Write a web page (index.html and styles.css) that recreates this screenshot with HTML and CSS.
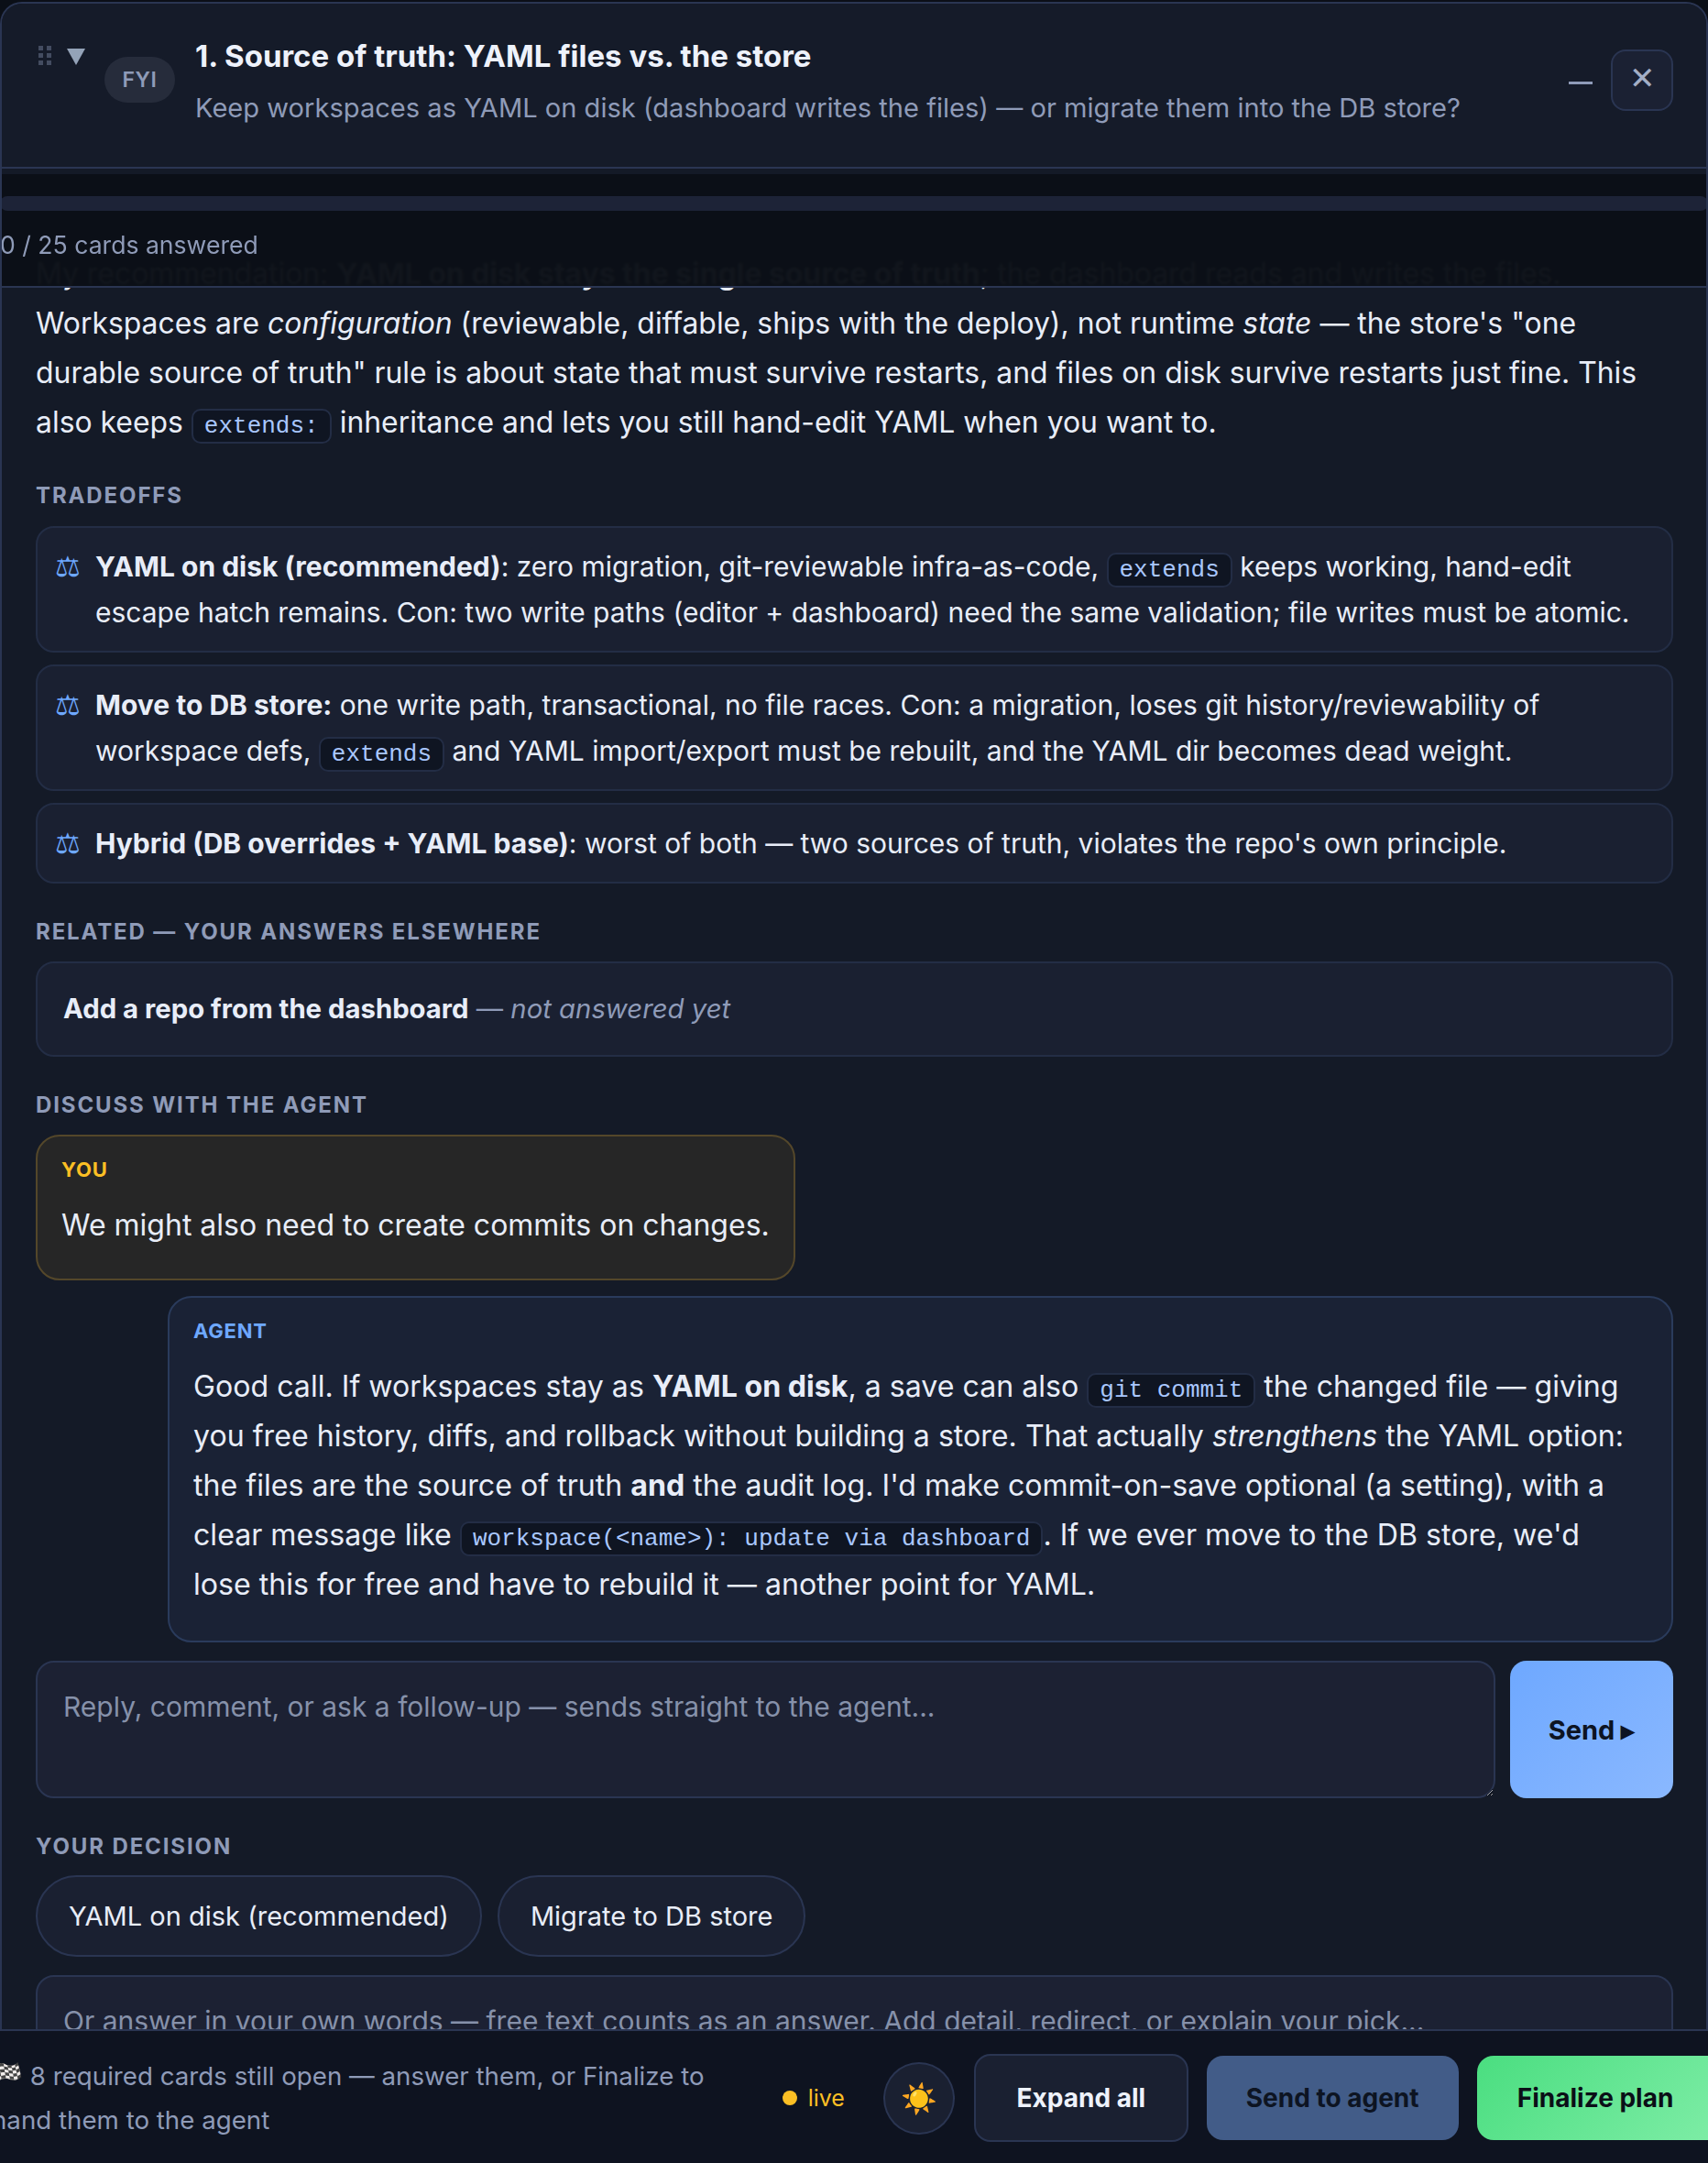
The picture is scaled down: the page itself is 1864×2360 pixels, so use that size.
FILE: index.html
```html
<!DOCTYPE html>
<html lang="en">
<head>
  <meta charset="UTF-8">
  <title>Plan review</title>
  <link rel="stylesheet" href="styles.css">
</head>
<body>
  <div class="page">
    <section class="card">
      <header class="card-head">
        <span class="grip">
          <svg width="14" height="22" viewBox="0 0 14 22"><g fill="#434c60"><rect x="0" y="0" width="5" height="5"/><rect x="9" y="0" width="5" height="5"/><rect x="0" y="8" width="5" height="5"/><rect x="9" y="8" width="5" height="5"/><rect x="0" y="16" width="5" height="5"/><rect x="9" y="16" width="5" height="5"/></g></svg>
        </span>
        <span class="caret"></span>
        <span class="badge">FYI</span>
        <div class="head-text">
          <h2 class="card-title">1. Source of truth: YAML files vs. the store</h2>
          <p class="card-sub">Keep workspaces as YAML on disk (dashboard writes the files) — or migrate them into the DB store?</p>
        </div>
        <span class="minimize"></span>
        <button class="close">✕</button>
      </header>

      <div class="progress">
        <div class="progress-track"></div>
        <div class="progress-label">0 / 25 cards answered</div>
      </div>

      <div class="card-body">
        <p class="lead">My recommendation: <strong>YAML on disk stays the single source of truth</strong>; the dashboard reads and writes the files. Workspaces are <em>configuration</em> (reviewable, diffable, ships with the deploy), not runtime <em>state</em> — the store's "one durable source of truth" rule is about state that must survive restarts, and files on disk survive restarts just fine. This also keeps <code>extends:</code> inheritance and lets you still hand-edit YAML when you want to.</p>

        <h3 class="section-label">Tradeoffs</h3>
        <ul class="tradeoffs">
          <li class="tradeoff"><span class="scale">⚖</span><div><strong>YAML on disk (recommended)</strong>: zero migration, git-reviewable infra-as-code, <code>extends</code> keeps working, hand-edit escape hatch remains. Con: two write paths (editor + dashboard) need the same validation; file writes must be atomic.</div></li>
          <li class="tradeoff"><span class="scale">⚖</span><div><strong>Move to DB store:</strong> one write path, transactional, no file races. Con: a migration, loses git history/reviewability of workspace defs, <code>extends</code> and YAML import/export must be rebuilt, and the YAML dir becomes dead weight.</div></li>
          <li class="tradeoff"><span class="scale">⚖</span><div><strong>Hybrid (DB overrides + YAML base)</strong>: worst of both — two sources of truth, violates the repo's own principle.</div></li>
        </ul>

        <h3 class="section-label">Related — your answers elsewhere</h3>
        <div class="related"><strong>Add a repo from the dashboard</strong> <span class="dim">— <em>not answered yet</em></span></div>

        <h3 class="section-label">Discuss with the agent</h3>
        <div class="bubble bubble-you">
          <div class="who">You</div>
          <div>We might also need to create commits on changes.</div>
        </div>
        <div class="bubble bubble-agent">
          <div class="who">Agent</div>
          <div>Good call. If workspaces stay as <strong>YAML on disk</strong>, a save can also <code>git commit</code> the changed file — giving you free history, diffs, and rollback without building a store. That actually <em>strengthens</em> the YAML option: the files are the source of truth <strong>and</strong> the audit log. I'd make commit-on-save optional (a setting), with a clear message like <code>workspace(&lt;name&gt;): update via dashboard</code>. If we ever move to the DB store, we'd lose this for free and have to rebuild it — another point for YAML.</div>
        </div>

        <div class="reply">
          <textarea class="reply-input" placeholder="Reply, comment, or ask a follow-up — sends straight to the agent..."></textarea>
          <button class="send">Send ▸</button>
        </div>

        <h3 class="section-label">Your decision</h3>
        <div class="choices">
          <button class="choice">YAML on disk (recommended)</button>
          <button class="choice">Migrate to DB store</button>
        </div>
        <textarea class="own-words" placeholder="Or answer in your own words — free text counts as an answer. Add detail, redirect, or explain your pick..."></textarea>
      </div>
    </section>

    <footer class="footer">
      <div class="footer-note">🏁 8 required cards still open — answer them, or Finalize to hand them to the agent</div>
      <div class="live"><span class="live-dot"></span>live</div>
      <button class="theme">☀️</button>
      <button class="btn btn-expand">Expand all</button>
      <button class="btn btn-send">Send to agent</button>
      <button class="btn btn-final">Finalize plan</button>
    </footer>
  </div>
</body>
</html>
```

FILE: styles.css
```css
* {
  box-sizing: border-box;
}
html, body {
  margin: 0;
  height: 100%;
  background: #0b0f17;
  color-scheme: dark;
}
body {
  font-family: Inter, "Noto Sans", sans-serif;
  font-size: 32px;
  line-height: 54px;
  color: #e8edf8;
  overflow: hidden;
}
button, textarea {
  font-family: inherit;
}
.page {
  height: 100vh;
  display: flex;
  flex-direction: column;
  overflow: hidden;
}

/* card */
.card {
  flex: 1;
  min-height: 0;
  margin-top: 2px;
  background: #141a27;
  border: 2px solid #2a3552;
  border-bottom: 0;
  border-radius: 24px 24px 0 0;
  overflow: hidden;
}
.card-head {
  display: flex;
  height: 180px;
  padding: 0 36px 0 40px;
  background: #151b29;
  border-bottom: 2px solid #2a3552;
}
.grip {
  margin: 46px 17px 0 0;
  height: 22px;
  line-height: 0;
}
.caret {
  width: 0;
  height: 0;
  margin-top: 49px;
  border-left: 10px solid transparent;
  border-right: 10px solid transparent;
  border-top: 18px solid #94a3b8;
}
.badge {
  width: 77px;
  height: 50px;
  margin: 58px 22px 0 21px;
  border-radius: 25px;
  background: #262c3b;
  color: #8f9bb8;
  font-size: 23px;
  font-weight: 600;
  line-height: 50px;
  text-align: center;
  letter-spacing: 0.5px;
}
.head-text {
  flex: 1;
  padding-top: 32px;
}
.card-title {
  margin: 0;
  font-size: 33px;
  font-weight: 650;
  line-height: 50px;
  color: #eef2fb;
}
.card-sub {
  margin: 7px 0 0;
  font-size: 29.1px;
  line-height: 50px;
  color: #8f9bb8;
}
.minimize {
  width: 26px;
  height: 3px;
  margin: 85px 20px 0 0;
  background: #8f9bb8;
}
.close {
  width: 68px;
  height: 67px;
  margin-top: 50px;
  padding: 0 0 6px;
  border: 2px solid #2a3552;
  border-radius: 16px;
  background: #1b2133;
  color: #a3aec6;
  font-size: 34px;
  line-height: 1;
}

.progress {
  position: relative;
  z-index: 2;
  height: 124px;
  margin: 6px -2px -42px;
  padding-top: 24px;
  background: rgba(11, 15, 23, 0.975);
  backdrop-filter: blur(1px);
  border-bottom: 2px solid #2a3552;
}
.progress-track {
  height: 16px;
  border-radius: 8px;
  background: #1d2337;
}
.progress-label {
  margin-top: 14px;
  font-size: 26.6px;
  line-height: 46px;
  color: #8f9bb8;
}

/* body */
.card-body {
  padding: 0 36px 0 37px;
}
.lead {
  margin: 0;
  font-size: 31.9px;
}
code {
  display: inline-block;
  padding: 0 12px;
  border: 2px solid #232d45;
  border-radius: 10px;
  background: #0f1522;
  color: #a9c7ff;
  font-family: "Liberation Mono", monospace;
  font-size: 26px;
  line-height: 34px;
}
.section-label {
  margin: 36px 0 0;
  font-size: 24px;
  font-weight: 700;
  line-height: 34px;
  letter-spacing: 1.88px;
  text-transform: uppercase;
  color: #8f9bb8;
}
.tradeoffs {
  display: flex;
  flex-direction: column;
  gap: 13px;
  list-style: none;
  margin: 16px 0 0;
  padding: 0;
}
.tradeoff {
  display: flex;
  gap: 18px;
  padding: 17px 20px 17px 19px;
  border: 2px solid #232d45;
  border-radius: 20px;
  background: #1a2031;
  font-size: 30px;
  line-height: 50px;
}
.scale {
  flex: none;
  width: 26px;
  color: #6ea8ff;
  font-size: 31px;
}
.related {
  margin-top: 15px;
  padding: 23px 28px;
  border: 2px solid #232d45;
  border-radius: 20px;
  background: #1a2031;
  font-size: 29.3px;
}
.dim {
  color: #8f9bb8;
}
.bubble {
  padding: 18px 26px 31px;
  border-radius: 26px;
  border: 2px solid;
}
.who {
  margin-bottom: 16px;
  font-size: 22px;
  font-weight: 700;
  line-height: 36px;
  letter-spacing: 0.8px;
  text-transform: uppercase;
}
.bubble-you {
  width: 829px;
  margin-top: 15px;
  background: #262626;
  border-color: #54472a;
}
.bubble-you .who {
  color: #fbbf24;
}
.bubble-agent {
  margin: 17px 0 0 144px;
  padding-right: 30px;
  padding-bottom: 34px;
  background: #1a2235;
  border-color: #2a3b5c;
  font-size: 32.13px;
}
.bubble-agent .who {
  color: #6ea8ff;
}
.reply {
  display: flex;
  gap: 16px;
  margin-top: 20px;
}
textarea {
  display: block;
  border: 2px solid #2a3552;
  border-radius: 20px;
  background: #1c2133;
  color: #e8edf8;
  font-size: 30px;
  line-height: 46px;
  padding: 25px 28px;
  outline: none;
}
textarea::placeholder {
  color: #8691aa;
  opacity: 1;
}
.reply-input {
  flex: 1;
  height: 150px;
}
.send {
  width: 178px;
  border: 0;
  border-radius: 18px;
  background: linear-gradient(135deg, #6ea8ff, #8ab8ff);
  color: #0d1422;
  font-size: 29px;
  font-weight: 650;
}
.choices {
  display: flex;
  gap: 17px;
  margin-top: 14px;
}
.choice {
  height: 89px;
  padding: 0 34px;
  border: 2px solid #2a3552;
  border-radius: 45px;
  background: #1a2031;
  color: #e8edf8;
  font-size: 29px;
}
.own-words {
  width: 100%;
  height: 150px;
  margin-top: 20px;
}

/* footer */
.footer {
  flex: none;
  display: flex;
  align-items: center;
  width: 1940px;
  height: 146px;
  margin-left: -9px;
  padding-top: 2px;
  background: #0e1320;
  border-top: 2px solid #2a3552;
}
.footer-note {
  width: 805px;
  font-size: 27.7px;
  line-height: 48px;
  color: #8f9bb8;
}
.live {
  display: flex;
  align-items: center;
  gap: 12px;
  width: 111px;
  margin-left: 60px;
  color: #fbbf24;
  font-size: 25px;
}
.live-dot {
  width: 16px;
  height: 16px;
  border-radius: 50%;
  background: #fbbf24;
}
.theme {
  width: 78px;
  height: 79px;
  padding: 0;
  border: 2px solid #2a3552;
  border-radius: 50%;
  background: #1a2031;
  font-size: 32px;
}
.btn {
  height: 92px;
  margin-left: 20px;
  border: 0;
  border-radius: 18px;
  font-size: 28px;
  font-weight: 650;
}
.btn-expand {
  width: 234px;
  height: 96px;
  margin-left: 21px;
  border: 2px solid #2a3552;
  background: #1a2031;
  color: #eef2fb;
}
.btn-send {
  width: 276px;
  background: #425c88;
  color: #0d1422;
}
.btn-final {
  width: 320px;
  text-align: left;
  padding-left: 44px;
  background: linear-gradient(135deg, #4ade80, #86efac);
  color: #0b0f17;
}
```
